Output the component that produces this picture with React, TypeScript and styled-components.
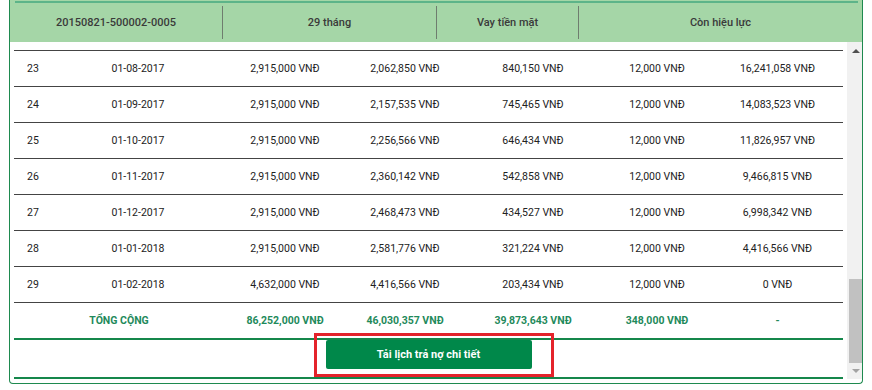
import styled, { createGlobalStyle } from 'styled-components';

const GlobalStyle = createGlobalStyle`
  html, body {
    margin: 0;
    padding: 0;
    background: #ffffff;
  }
  body {
    font-family: Roboto, 'Liberation Sans', Arial, sans-serif;
  }
`;

const headers = ['20150821-500002-0005', '29 tháng', 'Vay tiền mặt', 'Còn hiệu lực'];

const rows = [
  ['23', '01-08-2017', '2,915,000 VNĐ', '2,062,850 VNĐ', '840,150 VNĐ', '12,000 VNĐ', '16,241,058 VNĐ'],
  ['24', '01-09-2017', '2,915,000 VNĐ', '2,157,535 VNĐ', '745,465 VNĐ', '12,000 VNĐ', '14,083,523 VNĐ'],
  ['25', '01-10-2017', '2,915,000 VNĐ', '2,256,566 VNĐ', '646,434 VNĐ', '12,000 VNĐ', '11,826,957 VNĐ'],
  ['26', '01-11-2017', '2,915,000 VNĐ', '2,360,142 VNĐ', '542,858 VNĐ', '12,000 VNĐ', '9,466,815 VNĐ'],
  ['27', '01-12-2017', '2,915,000 VNĐ', '2,468,473 VNĐ', '434,527 VNĐ', '12,000 VNĐ', '6,998,342 VNĐ'],
  ['28', '01-01-2018', '2,915,000 VNĐ', '2,581,776 VNĐ', '321,224 VNĐ', '12,000 VNĐ', '4,416,566 VNĐ'],
  ['29', '01-02-2018', '4,632,000 VNĐ', '4,416,566 VNĐ', '203,434 VNĐ', '12,000 VNĐ', '0 VNĐ'],
];

const totals = ['86,252,000 VNĐ', '46,030,357 VNĐ', '39,873,643 VNĐ', '348,000 VNĐ', '-'];

export default function App() {
  return (
    <>
      <GlobalStyle />
      <Panel>
        <Header>
          {headers.map((h, i) => (
            <HeadCell key={h} $divider={i > 0}>
              {h}
            </HeadCell>
          ))}
        </Header>
        <ScrollArea>
          <Content>
            {rows.map((r) => (
              <Row key={r[0]}>
                {r.map((c, i) => (
                  <Cell key={i}>{c}</Cell>
                ))}
              </Row>
            ))}
            <TotalRow>
              <TotalCell $span={2}>TỔNG CỘNG</TotalCell>
              {totals.map((t, i) => (
                <TotalCell key={i}>{t}</TotalCell>
              ))}
            </TotalRow>
            <ButtonBar>
              <ButtonWrap>
                <Highlight />
                <DownloadButton type='button'>Tải lịch trả nợ chi tiết</DownloadButton>
              </ButtonWrap>
            </ButtonBar>
          </Content>
          <Scrollbar>
            <Arrow $up />
            <Track />
            <Thumb />
            <Arrow />
          </Scrollbar>
        </ScrollArea>
      </Panel>
    </>
  );
}

const Panel = styled.div`
  margin-left: 9px;
  width: 854px;
  height: 384px;
  box-sizing: border-box;
  border: 1px solid #1e8a4f;
  border-top: none;
  border-radius: 0 0 4px 4px;
  padding-bottom: 4px;
  display: flex;
  flex-direction: column;
`;

const Header = styled.div`
  height: 42px;
  flex: none;
  display: grid;
  grid-template-columns: 212px 214px 142px 1fr;
  background:
    linear-gradient(#5db489, #5db489) 5px 1px / calc(100% - 9px) 2px no-repeat,
    #a5d6a7;
`;

const HeadCell = styled.div<{ $divider?: boolean }>`
  margin: 6px 0 3px;
  border-left: ${(p) => (p.$divider ? '1px solid #6f7d6f' : 'none')};
  display: flex;
  align-items: center;
  justify-content: center;
  font-size: 11px;
  font-weight: 500;
  color: #3a3a3a;
`;

const ScrollArea = styled.div`
  height: 337px;
  display: flex;
`;

const Content = styled.div`
  flex: 1;
  padding: 8px 4px 0;
  display: flex;
  flex-direction: column;
`;

const cols = '38px 172px 122px 118px 138px 110px 131px';

const Row = styled.div`
  display: grid;
  grid-template-columns: ${cols};
  height: 35px;
  border-top: 1px solid #444;
  align-items: center;
`;

const Cell = styled.div`
  text-align: center;
  font-size: 10.5px;
  color: #222;
  white-space: nowrap;
`;

const TotalRow = styled(Row)`
  border-bottom: 2px solid #15874b;
`;

const TotalCell = styled.div<{ $span?: number }>`
  grid-column: span ${(p) => p.$span ?? 1};
  text-align: center;
  font-size: 10.5px;
  font-weight: 700;
  color: #1f8a5b;
  white-space: nowrap;
`;

const ButtonBar = styled.div`
  height: 37px;
  display: flex;
  justify-content: center;
  align-items: flex-start;
  border-bottom: 2px solid #15874b;
`;

const ButtonWrap = styled.div`
  position: relative;
`;

const Highlight = styled.div`
  position: absolute;
  left: -12px;
  top: -7px;
  width: 240px;
  height: 44px;
  box-sizing: border-box;
  border: 3px solid #e4232b;
  z-index: 2;
  pointer-events: none;
`;

const DownloadButton = styled.button`
  width: 206px;
  height: 29px;
  border: none;
  border-radius: 2px;
  background: #00884a;
  color: #ffffff;
  font-family: Roboto, 'Liberation Sans', Arial, sans-serif;
  font-size: 11px;
  font-weight: 700;
  cursor: pointer;
`;

const Scrollbar = styled.div`
  width: 15px;
  background: #f1f1f1;
  display: flex;
  flex-direction: column;
  align-items: flex-end;
`;

const Arrow = styled.div<{ $up?: boolean }>`
  width: 13px;
  height: ${(p) => (p.$up ? '17px' : '16px')};
  display: flex;
  align-items: center;
  justify-content: center;

  &::after {
    content: '';
    width: 0;
    height: 0;
    border-left: 4px solid transparent;
    border-right: 4px solid transparent;
    ${(p) => (p.$up ? 'border-bottom: 4px solid #505050;' : 'border-top: 4px solid #a3a3a3;')}
  }
`;

const Track = styled.div`
  flex: 1;
`;

const Thumb = styled.div`
  width: 13px;
  height: 84px;
  background: #c1c1c1;
`;
